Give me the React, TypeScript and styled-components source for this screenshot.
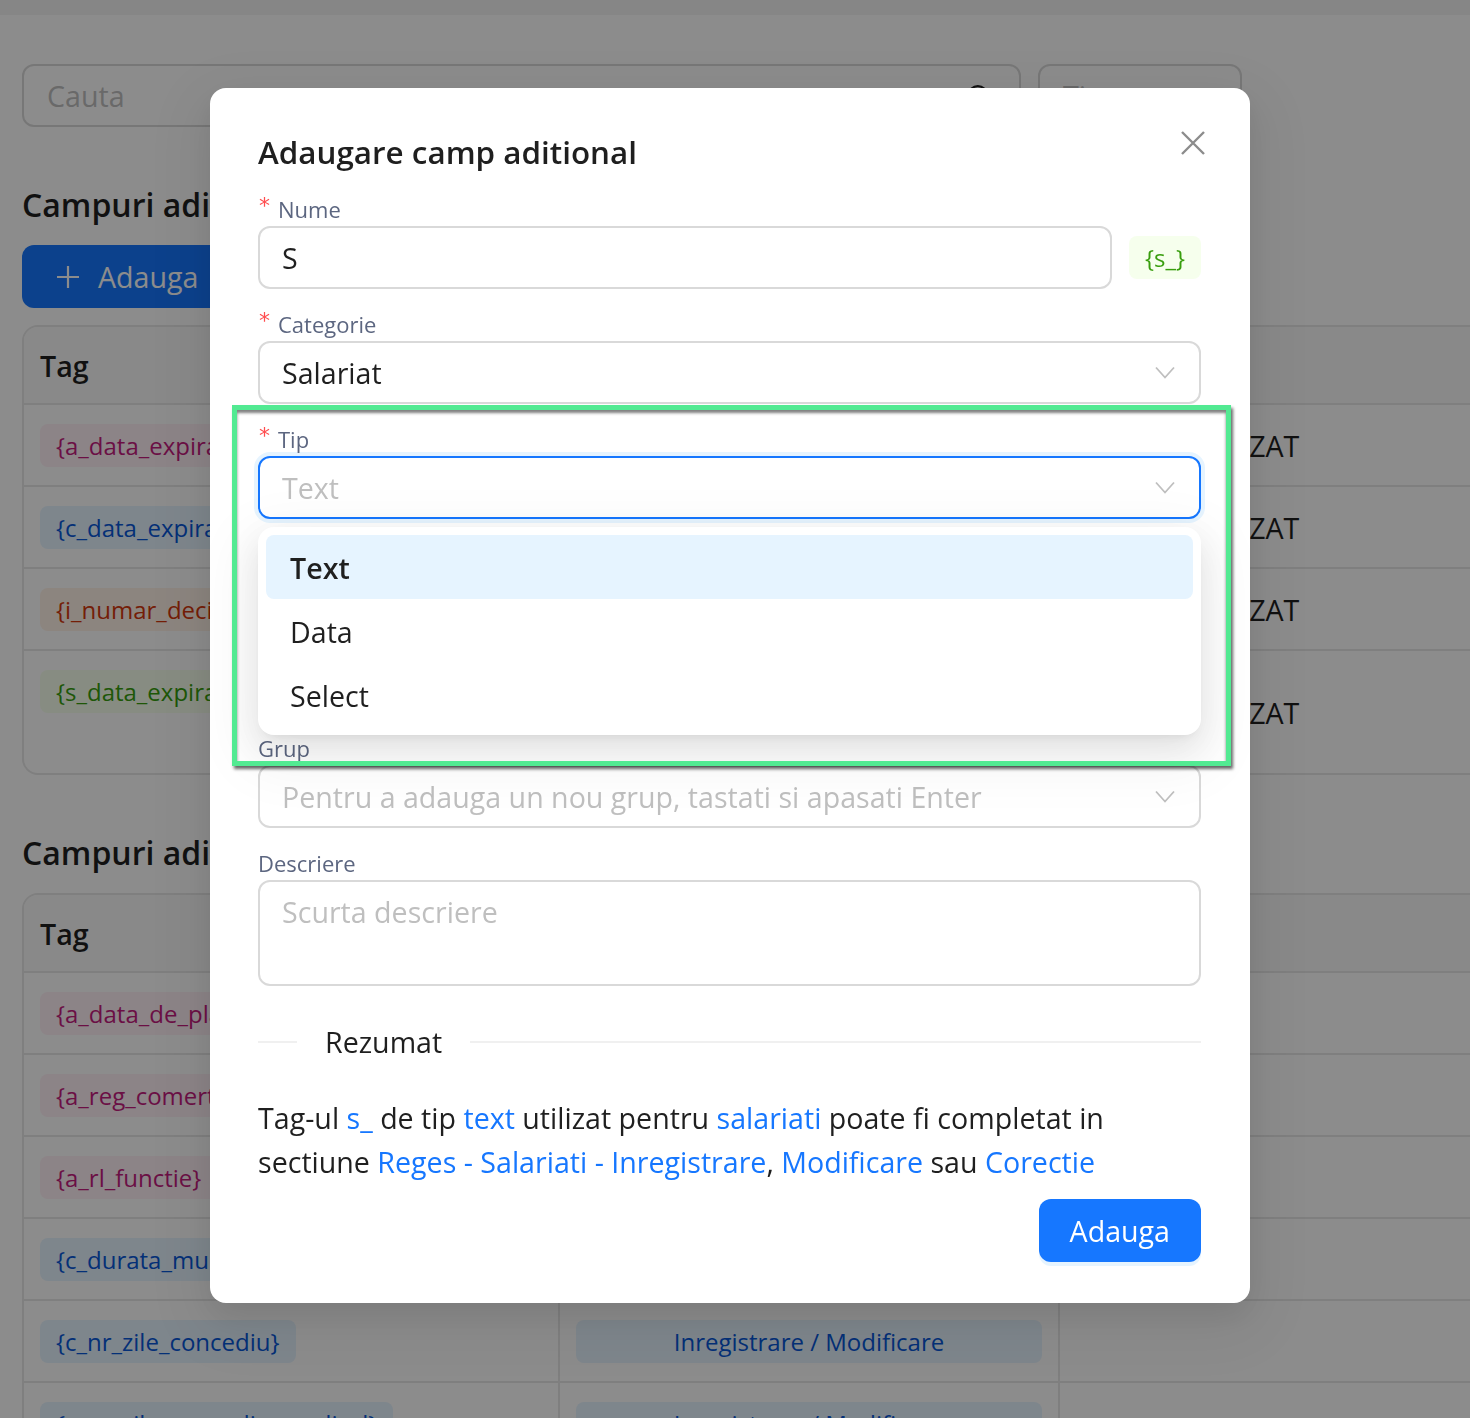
import React from 'react';
import styled, { createGlobalStyle, css } from 'styled-components';

const GlobalStyle = createGlobalStyle`
  html, body {
    margin: 0;
    padding: 0;
  }
  body {
    font-family: "Open Sans", "Noto Sans", sans-serif;
    color: #1f1f1f;
    background: #ffffff;
    overflow: hidden;
  }
  * {
    box-sizing: border-box;
  }
`;

type TagColor = 'magenta' | 'blue' | 'volcano' | 'green';

const tagColors: Record<TagColor, { bg: string; fg: string }> = {
  magenta: { bg: '#fff0f6', fg: '#c41d7f' },
  blue: { bg: '#e6f4ff', fg: '#0958d9' },
  volcano: { bg: '#fff2e8', fg: '#d4380d' },
  green: { bg: '#f6ffed', fg: '#389e0d' },
};

const BODY_SIZE = '28.6px';

/* ---------- background page ---------- */

const Page = styled.div`
  width: 1540px;
  min-height: 1418px;
`;

const TopStrip = styled.div`
  height: 15px;
  background: #f4f4f4;
`;

const PageBody = styled.div`
  padding: 49px 0 0 22px;
`;

const Toolbar = styled.div`
  display: flex;
  gap: 17px;
`;

const SearchBox = styled.div<{ $width: number }>`
  width: ${(p) => p.$width}px;
  height: 63px;
  border: 2px solid #d9d9d9;
  border-radius: 12px;
  display: flex;
  align-items: center;
  justify-content: space-between;
  padding: 0 26px 0 23px;
  font-size: ${BODY_SIZE};
  color: #bfbfbf;
`;

const SectionTitle = styled.h2`
  margin: 56px 0 18px;
  font-size: 32px;
  line-height: 44px;
  font-weight: 600;
  color: #1f1f1f;
`;

const AddButton = styled.button`
  height: 63px;
  display: inline-flex;
  align-items: center;
  gap: 19px;
  padding: 0 40px 0 35px;
  border: none;
  border-radius: 12px;
  background: #1677ff;
  color: #ffffff;
  font-family: inherit;
  font-size: ${BODY_SIZE};
`;

const Table = styled.div<{ $gap?: number }>`
  margin-top: ${(p) => p.$gap ?? 17}px;
  width: 1500px;
  border: 2px solid #e8e8e8;
  border-radius: 16px;
  overflow: hidden;
`;

const TableRow = styled.div<{ $tall?: boolean; $bordered?: boolean }>`
  display: grid;
  grid-template-columns: 534px 500px 1fr;
  min-height: ${(p) => (p.$tall ? 122 : 82)}px;
  border-bottom: 2px solid #e8e8e8;
  &:last-child {
    border-bottom: none;
  }
  ${(p) =>
    p.$bordered &&
    css`
      & > div + div {
        border-left: 2px solid #e8e8e8;
      }
    `}
`;

const HeaderRow = styled(TableRow)`
  min-height: 78px;
  background: #fafafa;
`;

const HeaderCell = styled.div`
  display: flex;
  align-items: center;
  padding: 0 16px;
  font-size: ${BODY_SIZE};
  font-weight: 600;
`;

const Cell = styled.div<{ $middle?: boolean }>`
  padding: 19px 16px 18px;
  font-size: ${BODY_SIZE};
  ${(p) =>
    p.$middle &&
    css`
      display: flex;
      align-items: center;
      padding-left: 40px;
    `}
`;

const Chip = styled.span<{ $color: TagColor; $block?: boolean }>`
  display: ${(p) => (p.$block ? 'flex' : 'inline-flex')};
  justify-content: center;
  align-items: center;
  height: 43px;
  padding: 0 16px;
  border-radius: 8px;
  font-size: 24px;
  white-space: nowrap;
  background: ${(p) => tagColors[p.$color].bg};
  color: ${(p) => tagColors[p.$color].fg};
`;

/* ---------- modal ---------- */

const Mask = styled.div`
  position: fixed;
  inset: 0;
  background: rgba(0, 0, 0, 0.45);
`;

const ModalLayer = styled.div`
  position: fixed;
  inset: 0;
  padding: 88px 0 0 210px;
`;

const Modal = styled.div`
  position: relative;
  width: 1040px;
  background: #ffffff;
  border-radius: 16px;
  padding: 40px 49px 41px 48px;
  box-shadow: 0 12px 32px rgba(0, 0, 0, 0.08), 0 18px 56px 16px rgba(0, 0, 0, 0.05);
`;

const ModalTitle = styled.h1`
  margin: 0 0 16px;
  font-size: 31.4px;
  line-height: 48px;
  font-weight: 600;
  color: #1f1f1f;
`;

const CloseButton = styled.button`
  position: absolute;
  top: 43px;
  right: 45px;
  width: 24px;
  height: 24px;
  padding: 0;
  border: none;
  background: none;
  display: flex;
`;

const FormItem = styled.div<{ $tight?: boolean }>`
  margin-bottom: ${(p) => (p.$tight ? -4 : 18)}px;
`;

const Label = styled.label`
  height: 34px;
  display: flex;
  align-items: center;
  font-size: 22px;
  color: #5c6680;
`;

const Required = styled.span`
  color: #ff4d4f;
  font-size: 22px;
  margin: -8px 8px 0 1px;
  font-family: "DejaVu Sans", sans-serif;
`;

const NameRow = styled.div`
  display: flex;
  align-items: center;
  gap: 17px;
`;

const fieldBox = css`
  height: 63px;
  border: 2px solid #d9d9d9;
  border-radius: 12px;
  background: #ffffff;
  font-family: inherit;
  font-size: ${BODY_SIZE};
  color: #1f1f1f;
`;

const TextInput = styled.input`
  ${fieldBox};
  flex: 1;
  width: 100%;
  padding: 0 22px;
  outline: none;
`;

const SelectBox = styled.div<{ $focused?: boolean }>`
  ${fieldBox};
  display: flex;
  align-items: center;
  justify-content: space-between;
  padding: 0 24px 0 22px;
  ${(p) =>
    p.$focused &&
    css`
      border-color: #1677ff;
      box-shadow: 0 0 0 4px rgba(5, 145, 255, 0.1);
    `}
`;

const SelectValue = styled.span<{ $placeholder?: boolean }>`
  color: ${(p) => (p.$placeholder ? '#bfbfbf' : '#1f1f1f')};
  white-space: nowrap;
`;

const TextArea = styled.textarea`
  ${fieldBox};
  display: block;
  width: 100%;
  height: 106px;
  padding: 8px 22px;
  line-height: 44px;
  resize: none;
  outline: none;
  &::placeholder {
    color: #bfbfbf;
  }
`;

const Dropdown = styled.div`
  position: relative;
  z-index: 2;
  margin-top: 8px;
  padding: 8px;
  background: #ffffff;
  border-radius: 16px;
  box-shadow: 0 12px 32px 0 rgba(0, 0, 0, 0.08), 0 6px 12px -8px rgba(0, 0, 0, 0.12),
    0 18px 56px 16px rgba(0, 0, 0, 0.05);
`;

const Option = styled.div<{ $active?: boolean }>`
  height: 64px;
  display: flex;
  align-items: center;
  padding: 0 24px;
  border-radius: 8px;
  font-size: ${BODY_SIZE};
  color: #1f1f1f;
  ${(p) =>
    p.$active &&
    css`
      background: #e6f4ff;
      font-weight: 600;
    `}
`;

const Divider = styled.div`
  display: flex;
  align-items: center;
  margin-top: 34px;
  height: 44px;
  &::before,
  &::after {
    content: '';
    height: 2px;
    background: #f0f0f0;
  }
  &::before {
    width: 39px;
  }
  &::after {
    flex: 1;
  }
`;

const DividerText = styled.span`
  padding: 0 28px;
  font-size: ${BODY_SIZE};
  font-weight: 500;
  line-height: 44px;
`;

const Summary = styled.p`
  margin: 32px 0 0;
  font-size: ${BODY_SIZE};
  line-height: 44px;
  color: #1f1f1f;
`;

const Hl = styled.span`
  color: #1677ff;
`;

const Footer = styled.div`
  display: flex;
  justify-content: flex-end;
  margin-top: 15px;
`;

const PrimaryButton = styled.button`
  height: 63px;
  padding: 0 31px;
  border: none;
  border-radius: 12px;
  background: #1677ff;
  color: #ffffff;
  font-family: inherit;
  font-size: ${BODY_SIZE};
  box-shadow: 0 4px 0 rgba(5, 145, 255, 0.1);
`;

const Annotation = styled.div`
  position: absolute;
  left: 22px;
  top: 317px;
  width: 999px;
  height: 361px;
  border: 5px solid #52ea92;
  box-shadow: 2px 3px 3px rgba(0, 0, 0, 0.6), inset 0 3px 3px rgba(0, 0, 0, 0.5);
  pointer-events: none;
  z-index: 3;
`;

/* ---------- icons ---------- */

const Chevron = () => (
  <svg width="20" height="13" viewBox="0 0 20 13" fill="none">
    <polyline points="1,1.5 10,11.5 19,1.5" stroke="#bfbfbf" strokeWidth="1.8" />
  </svg>
);

const CloseIcon = () => (
  <svg width="24" height="24" viewBox="0 0 24 24" fill="none">
    <path d="M1 1 L23 23 M23 1 L1 23" stroke="#8c8c8c" strokeWidth="2.4" />
  </svg>
);

const PlusIcon = () => (
  <svg width="22" height="22" viewBox="0 0 22 22" fill="none">
    <path d="M11 0 V22 M0 11 H22" stroke="#ffffff" strokeWidth="2.2" />
  </svg>
);

const SearchIcon = () => (
  <svg width="28" height="28" viewBox="0 0 24 24" fill="none" stroke="#1f1f1f" strokeWidth="2">
    <circle cx="11" cy="11" r="7.5" />
    <path d="M16.5 16.5 L22 22" />
  </svg>
);

/* ---------- data ---------- */

const firstTable: { tag: string; color: TagColor; tall?: boolean }[] = [
  { tag: '{a_data_expirare_aviz}', color: 'magenta' },
  { tag: '{c_data_expirare_contract}', color: 'blue' },
  { tag: '{i_numar_decizie}', color: 'volcano' },
  { tag: '{s_data_expirare_permis}', color: 'green', tall: true },
];

const secondTable: { tag: string; color: TagColor }[] = [
  { tag: '{a_data_de_plata}', color: 'magenta' },
  { tag: '{a_reg_comert}', color: 'magenta' },
  { tag: '{a_rl_functie}', color: 'magenta' },
  { tag: '{c_durata_munca}', color: 'blue' },
  { tag: '{c_nr_zile_concediu}', color: 'blue' },
  { tag: '{c_nr_zile_concediu_medical}', color: 'blue' },
];

const App: React.FC = () => {
  return (
    <>
      <GlobalStyle />
      <Page>
        <TopStrip />
        <PageBody>
          <Toolbar>
            <SearchBox $width={999}>
              Cauta
              <SearchIcon />
            </SearchBox>
            <SearchBox $width={204}>Tip</SearchBox>
          </Toolbar>

          <SectionTitle>Campuri aditionale personalizate</SectionTitle>
          <AddButton>
            <PlusIcon />
            Adauga
          </AddButton>
          <Table>
            <HeaderRow>
              <HeaderCell>Tag</HeaderCell>
              <HeaderCell>Sectiune</HeaderCell>
              <HeaderCell />
            </HeaderRow>
            {firstTable.map((row) => (
              <TableRow key={row.tag} $tall={row.tall}>
                <Cell>
                  <Chip $color={row.color}>{row.tag}</Chip>
                </Cell>
                <Cell />
                <Cell $middle>PERSONALIZAT</Cell>
              </TableRow>
            ))}
          </Table>

          <SectionTitle>Campuri aditionale predefinite</SectionTitle>
          <Table $gap={18}>
            <HeaderRow $bordered>
              <HeaderCell>Tag</HeaderCell>
              <HeaderCell>Sectiune</HeaderCell>
              <HeaderCell />
            </HeaderRow>
            {secondTable.map((row) => (
              <TableRow key={row.tag} $bordered>
                <Cell>
                  <Chip $color={row.color}>{row.tag}</Chip>
                </Cell>
                <Cell>
                  <Chip $color="blue" $block>
                    Inregistrare / Modificare
                  </Chip>
                </Cell>
                <Cell />
              </TableRow>
            ))}
          </Table>
        </PageBody>
      </Page>

      <Mask />
      <ModalLayer>
        <Modal>
          <ModalTitle>Adaugare camp aditional</ModalTitle>
          <CloseButton aria-label="Inchide">
            <CloseIcon />
          </CloseButton>

          <FormItem>
            <Label>
              <Required>*</Required>Nume
            </Label>
            <NameRow>
              <TextInput defaultValue="S" />
              <Chip $color="green">{'{s_}'}</Chip>
            </NameRow>
          </FormItem>

          <FormItem>
            <Label>
              <Required>*</Required>Categorie
            </Label>
            <SelectBox>
              <SelectValue>Salariat</SelectValue>
              <Chevron />
            </SelectBox>
          </FormItem>

          <FormItem $tight>
            <Label>
              <Required>*</Required>Tip
            </Label>
            <SelectBox $focused>
              <SelectValue $placeholder>Text</SelectValue>
              <Chevron />
            </SelectBox>
            <Dropdown>
              <Option $active>Text</Option>
              <Option>Data</Option>
              <Option>Select</Option>
            </Dropdown>
          </FormItem>

          <FormItem>
            <Label>Grup</Label>
            <SelectBox>
              <SelectValue $placeholder>Pentru a adauga un nou grup, tastati si apasati Enter</SelectValue>
              <Chevron />
            </SelectBox>
          </FormItem>

          <FormItem>
            <Label>Descriere</Label>
            <TextArea placeholder="Scurta descriere" />
          </FormItem>

          <Divider>
            <DividerText>Rezumat</DividerText>
          </Divider>

          <Summary>
            Tag-ul <Hl>s_</Hl> de tip <Hl>text</Hl> utilizat pentru <Hl>salariati</Hl> poate fi completat in
            sectiune <Hl>Reges - Salariati - Inregistrare</Hl>, <Hl>Modificare</Hl> sau <Hl>Corectie</Hl>
          </Summary>

          <Footer>
            <PrimaryButton>Adauga</PrimaryButton>
          </Footer>

          <Annotation />
        </Modal>
      </ModalLayer>
    </>
  );
};

export default App;
